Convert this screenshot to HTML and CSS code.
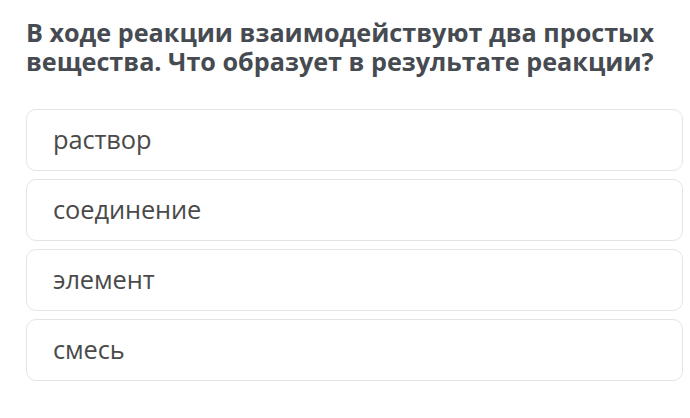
FILE: index.html
```html
<!DOCTYPE html>
<html lang="ru">
<head>
<meta charset="utf-8">
<link rel="stylesheet" href="styles.css">
</head>
<body>
<div class="quiz">
  <h1 class="question">В ходе реакции взаимодействуют два простых вещества. Что образует в результате реакции?</h1>
  <div class="options">
    <div class="option">раствор</div>
    <div class="option">соединение</div>
    <div class="option">элемент</div>
    <div class="option">смесь</div>
  </div>
</div>
</body>
</html>
```

FILE: styles.css
```css
html, body {
  margin: 0;
  padding: 0;
  background: #ffffff;
}
.quiz {
  padding: 18px 7px 0 26px;
  font-family: "Open Sans", "Noto Sans", sans-serif;
}
.question {
  margin: 0 0 32px 0;
  font-size: 25.2px;
  line-height: 29.4px;
  font-weight: 700;
  color: #464b51;
}
.options {
  display: flex;
  flex-direction: column;
  gap: 8px;
}
.option {
  height: 62px;
  box-sizing: border-box;
  border: 1px solid #e4e4e4;
  border-radius: 10px;
  padding: 0 0 1px 26px;
  display: flex;
  align-items: center;
  font-size: 25.4px;
  letter-spacing: -0.1px;
  color: #4a4a4a;
}
```
